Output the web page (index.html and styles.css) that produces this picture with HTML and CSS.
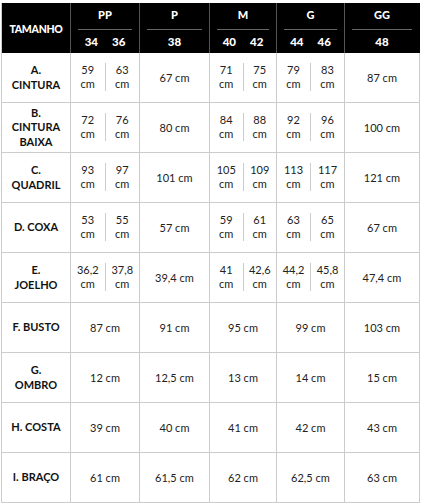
FILE: index.html
```html
<!DOCTYPE html>
<html lang="pt">
<head>
<meta charset="utf-8">
<title>Tabela de medidas</title>
<link rel="stylesheet" href="styles.css">
</head>
<body>
<div class="chart">
  <div class="hd lbl">TAMANHO</div>
  <div class="hd sz"><div class="t">PP</div><div class="ln"></div><div class="n"><span>34</span><span>36</span></div></div>
  <div class="hd sz"><div class="t">P</div><div class="ln"></div><div class="n"><span>38</span></div></div>
  <div class="hd sz"><div class="t">M</div><div class="ln"></div><div class="n"><span>40</span><span>42</span></div></div>
  <div class="hd sz"><div class="t">G</div><div class="ln"></div><div class="n"><span>44</span><span>46</span></div></div>
  <div class="hd sz last"><div class="t">GG</div><div class="ln"></div><div class="n"><span>48</span></div></div>

  <div class="c lbl">A.<br>CINTURA</div>
  <div class="c pair"><div class="h">59<br>cm</div><div class="h">63<br>cm</div></div>
  <div class="c">67 cm</div>
  <div class="c pair"><div class="h">71<br>cm</div><div class="h">75<br>cm</div></div>
  <div class="c pair"><div class="h">79<br>cm</div><div class="h">83<br>cm</div></div>
  <div class="c">87 cm</div>

  <div class="c lbl">B.<br>CINTURA<br>BAIXA</div>
  <div class="c pair"><div class="h">72<br>cm</div><div class="h">76<br>cm</div></div>
  <div class="c">80 cm</div>
  <div class="c pair"><div class="h">84<br>cm</div><div class="h">88<br>cm</div></div>
  <div class="c pair"><div class="h">92<br>cm</div><div class="h">96<br>cm</div></div>
  <div class="c">100 cm</div>

  <div class="c lbl">C.<br>QUADRIL</div>
  <div class="c pair"><div class="h">93<br>cm</div><div class="h">97<br>cm</div></div>
  <div class="c">101 cm</div>
  <div class="c pair"><div class="h">105<br>cm</div><div class="h">109<br>cm</div></div>
  <div class="c pair"><div class="h">113<br>cm</div><div class="h">117<br>cm</div></div>
  <div class="c">121 cm</div>

  <div class="c lbl">D. COXA</div>
  <div class="c pair"><div class="h">53<br>cm</div><div class="h">55<br>cm</div></div>
  <div class="c">57 cm</div>
  <div class="c pair"><div class="h">59<br>cm</div><div class="h">61<br>cm</div></div>
  <div class="c pair"><div class="h">63<br>cm</div><div class="h">65<br>cm</div></div>
  <div class="c">67 cm</div>

  <div class="c lbl">E.<br>JOELHO</div>
  <div class="c pair"><div class="h">36,2<br>cm</div><div class="h">37,8<br>cm</div></div>
  <div class="c">39,4 cm</div>
  <div class="c pair"><div class="h">41<br>cm</div><div class="h">42,6<br>cm</div></div>
  <div class="c pair"><div class="h">44,2<br>cm</div><div class="h">45,8<br>cm</div></div>
  <div class="c">47,4 cm</div>

  <div class="c lbl">F. BUSTO</div>
  <div class="c">87 cm</div>
  <div class="c">91 cm</div>
  <div class="c">95 cm</div>
  <div class="c">99 cm</div>
  <div class="c">103 cm</div>

  <div class="c lbl">G.<br>OMBRO</div>
  <div class="c">12 cm</div>
  <div class="c">12,5 cm</div>
  <div class="c">13 cm</div>
  <div class="c">14 cm</div>
  <div class="c">15 cm</div>

  <div class="c lbl">H. COSTA</div>
  <div class="c">39 cm</div>
  <div class="c">40 cm</div>
  <div class="c">41 cm</div>
  <div class="c">42 cm</div>
  <div class="c">43 cm</div>

  <div class="c lbl">I. BRAÇO</div>
  <div class="c">61 cm</div>
  <div class="c">61,5 cm</div>
  <div class="c">62 cm</div>
  <div class="c">62,5 cm</div>
  <div class="c">63 cm</div>
</div>
</body>
</html>
```
FILE: styles.css
```css
html, body {
  margin: 0;
  padding: 0;
  background: #fff;
}
body {
  padding: 3px 0 0 1px;
  font-family: "Lato", "Liberation Sans", sans-serif;
  font-size: 11px;
  color: #222;
}
.chart {
  display: grid;
  grid-template-columns: 69px 69px 70px 67px 68px 75px;
  grid-auto-rows: 50px;
  width: 419px;
  border-left: 1px solid #cccccc;
}
.chart > div {
  box-sizing: border-box;
}
.hd {
  background: #000;
  color: #fff;
  font-weight: 900;
  border-right: 1px solid #555;
}
.hd.last {
  border-right-color: #000;
}
.hd.lbl {
  display: flex;
  align-items: center;
  justify-content: center;
  font-size: 10.5px;
  letter-spacing: -0.3px;
  padding-top: 1px;
}
.sz {
  display: flex;
  flex-direction: column;
}
.sz .t {
  height: 26px;
  padding-bottom: 3px;
  box-sizing: border-box;
  display: flex;
  align-items: center;
  justify-content: center;
  font-size: 11px;
}
.sz .ln {
  height: 1px;
  background: #666;
  margin: 0 7px;
}
.sz .n {
  height: 23px;
  display: flex;
  align-items: center;
  justify-content: center;
  gap: 14px;
  font-size: 11.5px;
}
.c {
  border-right: 1px solid #cccccc;
  border-bottom: 1px solid #cccccc;
  display: flex;
  align-items: center;
  justify-content: center;
  text-align: center;
  line-height: 14px;
}
.c.lbl {
  font-weight: 700;
  color: #111;
  line-height: 14.5px;
}
.pair {
  align-items: center;
  justify-content: stretch;
  padding-bottom: 1px;
}
.pair .h {
  flex: 1;
  text-align: center;
  line-height: 14px;
}
.pair .h + .h {
  border-left: 1px solid #cccccc;
}
```
